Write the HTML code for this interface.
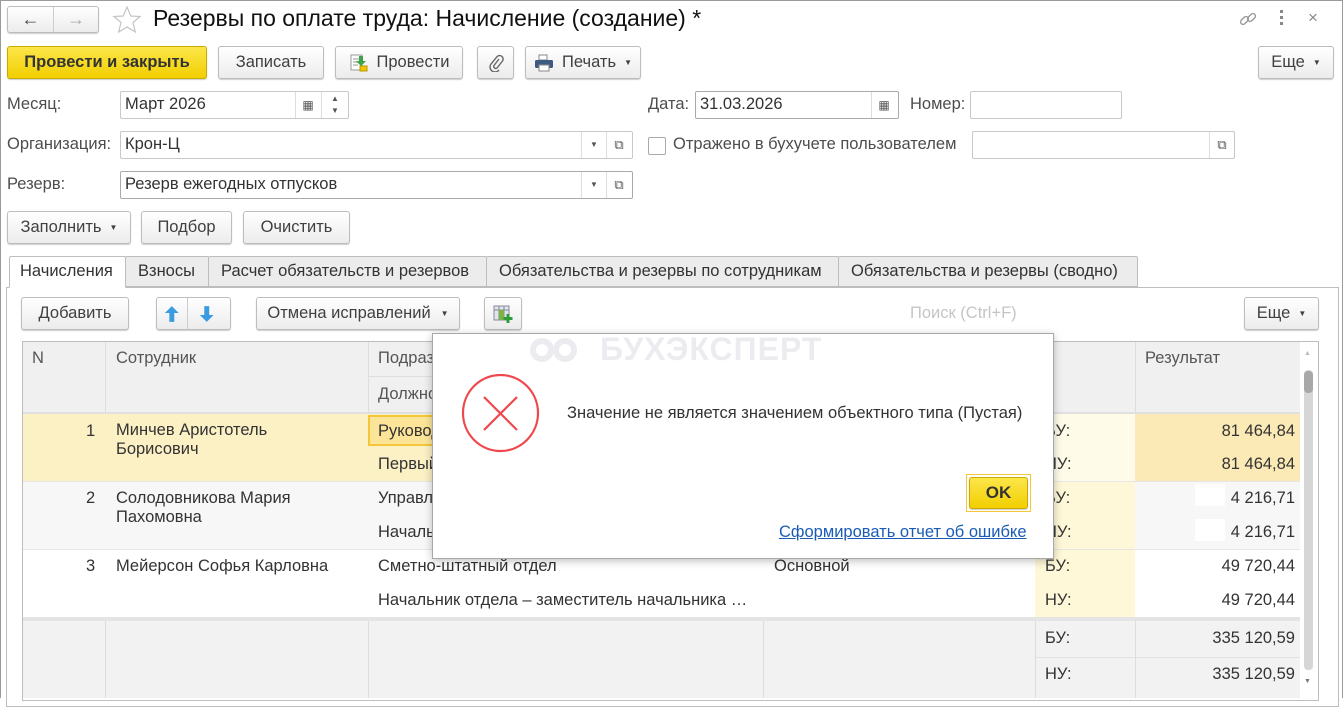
<!DOCTYPE html>
<html><head><meta charset="utf-8"><style>
*{box-sizing:border-box;margin:0;padding:0}
body{width:1343px;height:698px;overflow:hidden;background:#fff;font-family:"Liberation Sans",Arial,sans-serif;font-size:16.5px;color:#333;position:relative}
.a{position:absolute}
.btn{position:absolute;border:1px solid #bdbdbd;border-radius:3px;background:linear-gradient(#fff,#ececec);box-shadow:0 1px 1px rgba(0,0,0,.2);display:flex;align-items:center;justify-content:center;color:#404040;font-size:16.5px;white-space:nowrap}
.inp{position:absolute;border:1px solid #c8c8c8;border-radius:2px;background:#fff;height:28px;font-size:16.5px;color:#333;padding:3px 0 0 4px}
.lbl{position:absolute;color:#4d4d4d;font-size:16.5px;white-space:nowrap}
.dd{position:absolute;top:0;width:25px;height:26px;border-left:1px solid #ddd;text-align:center;font-size:8px;line-height:26px;color:#555}
.tab{position:absolute;top:256px;height:31px;border:1px solid #bdbdbd;background:#ececec;color:#333;font-size:16.5px;padding:5px 0 0 12px;border-radius:2px 2px 0 0;white-space:nowrap;overflow:hidden}
.cell{position:absolute;font-size:16.5px;color:#333;white-space:nowrap}
.hl{position:absolute;background:#ddd}
</style></head><body>
<div class="a" style="left:0;top:0;width:1343px;height:698px;border:1px solid #9a9a9a;border-bottom:none"></div>

<div class="btn" style="left:7px;top:6px;width:92px;height:27px;justify-content:flex-start">
 <span style="width:46px;text-align:center;font-size:18px;color:#444">&#8592;</span>
 <span style="width:1px;height:25px;background:#ccc"></span>
 <span style="width:45px;text-align:center;font-size:18px;color:#aaa">&#8594;</span>
</div>
<svg class="a" style="left:112px;top:5px" width="30" height="30" viewBox="0 0 30 30"><polygon points="15,2 18.8,11 28,11.5 21,17.5 23.3,27 15,22 6.7,27 9,17.5 2,11.5 11.2,11" fill="none" stroke="#c4c4c4" stroke-width="1.2"/></svg>
<div class="a" style="left:153px;top:5px;font-size:23px;color:#111;white-space:nowrap">Резервы по оплате труда: Начисление (создание) *</div>
<svg class="a" style="left:1238px;top:9px" width="20" height="20" viewBox="0 0 20 20"><g fill="none" stroke="#999" stroke-width="1.4"><rect x="2" y="9" width="9" height="5" rx="2.5" transform="rotate(-45 6.5 11.5)"/><rect x="9" y="6" width="9" height="5" rx="2.5" transform="rotate(-45 13.5 8.5)"/></g></svg>
<div class="a" style="left:1280px;top:10px;width:4px;font-size:0"><div style="width:3px;height:3px;background:#888;margin-bottom:3px"></div><div style="width:3px;height:3px;background:#888;margin-bottom:3px"></div><div style="width:3px;height:3px;background:#888"></div></div>
<div class="a" style="left:1308px;top:8px;font-size:17px;color:#888">×</div>

<div class="btn" style="left:7px;top:46px;width:200px;height:33px;background:linear-gradient(#fce64a,#f2cf00);border-color:#c9aa00;font-weight:bold;color:#333">Провести и закрыть</div>
<div class="btn" style="left:218px;top:46px;width:106px;height:33px">Записать</div>
<div class="btn" style="left:335px;top:46px;width:128px;height:33px"><svg width="20" height="20" viewBox="0 0 20 20" style="margin-right:8px"><rect x="2" y="2" width="11" height="15" fill="#fff" stroke="#999"/><path d="M4 6h6M4 9h6M4 12h5" stroke="#999"/><rect x="11" y="13" width="7" height="5" fill="#f2c400" stroke="#b90"/><path d="M10 3h4v5h3l-5 5-5-5h3z" fill="#3ca34a"/></svg>Провести</div>
<div class="btn" style="left:477px;top:46px;width:37px;height:33px"><svg width="16" height="18" viewBox="0 0 16 18"><path d="M11 5l-5 6.5a2 2 0 0 0 3 2.5l5.5-7a3.5 3.5 0 0 0-5.5-4.3L3 10a5 5 0 0 0 8 6" fill="none" stroke="#666" stroke-width="1.4"/></svg></div>
<div class="btn" style="left:525px;top:46px;width:116px;height:33px"><svg width="20" height="18" viewBox="0 0 20 18" style="margin-right:8px"><rect x="5" y="1" width="8" height="5" fill="#fff" stroke="#888"/><rect x="1" y="6" width="18" height="8" rx="1.5" fill="#3d5a80"/><rect x="5" y="11" width="10" height="6" fill="#fff" stroke="#888"/></svg>Печать <span style="font-size:8px;margin-left:8px">▼</span></div>
<div class="btn" style="left:1258px;top:46px;width:76px;height:33px">Еще <span style="font-size:8px;margin-left:8px">▼</span></div>

<div class="lbl" style="left:7px;top:95px">Месяц:</div>
<div class="inp" style="left:120px;top:91px;width:229px">Март 2026
 <div class="dd" style="left:174px;font-size:12px">&#9638;</div>
 <div class="dd" style="left:200px;width:27px;line-height:12px;padding-top:1px">▲<br>▼</div></div>
<div class="lbl" style="left:648px;top:95px">Дата:</div>
<div class="inp" style="left:695px;top:91px;width:204px;border-color:#aaa">31.03.2026<div class="dd" style="left:175px;font-size:12px">&#9638;</div></div>
<div class="lbl" style="left:910px;top:95px">Номер:</div>
<div class="inp" style="left:970px;top:91px;width:152px"></div>

<div class="lbl" style="left:7px;top:135px">Организация:</div>
<div class="inp" style="left:120px;top:131px;width:513px">Крон-Ц<div class="dd" style="left:460px">▼</div><div class="dd" style="left:485px;font-size:13px">&#10697;</div></div>
<div class="a" style="left:648px;top:137px;width:18px;height:18px;border:1px solid #aaa;border-radius:2px"></div>
<div class="lbl" style="left:673px;top:135px">Отражено в бухучете пользователем</div>
<div class="inp" style="left:972px;top:131px;width:263px"><div class="dd" style="left:236px;font-size:13px">&#10697;</div></div>

<div class="lbl" style="left:7px;top:175px">Резерв:</div>
<div class="inp" style="left:120px;top:171px;width:513px;border-color:#aaa">Резерв ежегодных отпусков<div class="dd" style="left:460px">▼</div><div class="dd" style="left:485px;font-size:13px">&#10697;</div></div>

<div class="btn" style="left:7px;top:211px;width:124px;height:33px">Заполнить <span style="font-size:8px;margin-left:8px">▼</span></div>
<div class="btn" style="left:141px;top:211px;width:91px;height:33px">Подбор</div>
<div class="btn" style="left:243px;top:211px;width:107px;height:33px">Очистить</div>

<div class="a" style="left:6px;top:287px;width:1333px;height:420px;border:1px solid #bdbdbd"></div>
<div class="tab" style="left:9px;width:117px;background:#fff;border-bottom-color:#fff;height:32px;padding-left:10px">Начисления</div>
<div class="tab" style="left:125px;width:84px">Взносы</div>
<div class="tab" style="left:208px;width:279px">Расчет обязательств и резервов</div>
<div class="tab" style="left:486px;width:353px">Обязательства и резервы по сотрудникам</div>
<div class="tab" style="left:838px;width:300px">Обязательства и резервы (сводно)</div>

<div class="btn" style="left:21px;top:297px;width:108px;height:33px">Добавить</div>
<div class="btn" style="left:156px;top:297px;width:75px;height:33px;justify-content:flex-start">
 <svg width="30" height="20" viewBox="0 0 30 20"><path d="M15 2l-7 7h4.5v9h5V9H22z" fill="#3a9be0"/></svg>
 <span style="width:1px;height:31px;background:#ccc"></span>
 <svg width="43" height="20" viewBox="0 0 43 20"><path d="M19 18l7-7h-4.5V2h-5v9H12z" fill="#3a9be0"/></svg></div>
<div class="btn" style="left:256px;top:297px;width:204px;height:33px">Отмена исправлений <span style="font-size:8px;margin-left:10px">▼</span></div>
<div class="btn" style="left:484px;top:297px;width:38px;height:33px"><svg width="22" height="20" viewBox="0 0 22 20"><rect x="2" y="2" width="15" height="14" fill="#dfe6ec" stroke="#889"/><path d="M2 6h15M7 2v14M12 2v14" stroke="#889"/><rect x="7" y="6" width="5" height="10" fill="#7cb342"/><path d="M16 10v9M11.5 14.5h9" stroke="#2e9c3a" stroke-width="3"/></svg></div>
<div class="a" style="left:910px;top:304px;color:#c5c5c5;font-size:16.5px">Поиск (Ctrl+F)</div>
<div class="btn" style="left:1244px;top:297px;width:75px;height:33px">Еще <span style="font-size:8px;margin-left:8px">▼</span></div>

<div class="a" style="left:22px;top:341px;width:1297px;height:360px;border:1px solid #bdbdbd;background:#fff"></div>
<div class="a" style="left:23px;top:342px;width:1277px;height:71px;background:#f0f0f0"></div>
<div class="a" style="left:23px;top:413px;width:1112px;height:68px;background:#fcf0c5"></div>
<div class="a" style="left:1135px;top:413px;width:165px;height:68px;background:#fbe9b6"></div>
<div class="a" style="left:1035px;top:413px;width:100px;height:68px;background:#fefbe9"></div>
<div class="a" style="left:23px;top:481px;width:1277px;height:68px;background:#f7f7f7"></div>
<div class="a" style="left:1035px;top:481px;width:100px;height:136px;background:#fef8d8"></div>
<div class="a" style="left:23px;top:621px;width:1277px;height:77px;background:#f2f2f2"></div>
<div class="a" style="left:368px;top:415px;width:130px;height:31px;border:2px solid #f4c63a;background:#fce598"></div>
<div class="hl" style="left:23px;top:412px;width:1277px;height:2px;background:#e0e0e0"></div>
<div class="hl" style="left:23px;top:481px;width:1277px;height:1px;background:#e6e6e6"></div>
<div class="hl" style="left:23px;top:549px;width:1277px;height:1px;background:#e6e6e6"></div>
<div class="hl" style="left:23px;top:617px;width:1277px;height:4px;background:#e4e4e4"></div>
<div class="hl" style="left:368px;top:376px;width:667px;height:1px"></div>
<div class="hl" style="left:1035px;top:657px;width:265px;height:1px;background:#e2e2e2"></div>
<div class="hl" style="left:105px;top:342px;width:1px;height:71px"></div>
<div class="hl" style="left:368px;top:342px;width:1px;height:71px"></div>
<div class="hl" style="left:1135px;top:342px;width:1px;height:71px"></div>
<div class="hl" style="left:105px;top:621px;width:1px;height:77px"></div>
<div class="hl" style="left:368px;top:621px;width:1px;height:77px"></div>
<div class="hl" style="left:763px;top:621px;width:1px;height:77px"></div>
<div class="hl" style="left:1035px;top:621px;width:1px;height:77px"></div>
<div class="hl" style="left:1135px;top:621px;width:1px;height:77px"></div>
<div class="a" style="left:1300px;top:342px;width:18px;height:356px;background:#fff"></div>
<div class="a" style="left:1304px;top:350px;font-size:7px;color:#bbb">▲</div>
<div class="a" style="left:1304px;top:370px;width:9px;height:300px;background:#d6d6d6;border-radius:4px"></div>
<div class="a" style="left:1304px;top:371px;width:9px;height:22px;background:#a8a8a8;border-radius:4px"></div>
<div class="a" style="left:1304px;top:678px;font-size:7px;color:#777">▼</div>

<div class="cell" style="left:32px;top:349px;color:#555">N</div>
<div class="cell" style="left:116px;top:349px;color:#555">Сотрудник</div>
<div class="cell" style="left:378px;top:349px;color:#555">Подразделение</div>
<div class="cell" style="left:378px;top:385px;color:#555">Должность</div>
<div class="cell" style="left:1145px;top:349px;color:#555">Результат</div>

<div class="cell" style="left:86px;top:422px">1</div>
<div class="cell" style="left:116px;top:421px;line-height:19px">Минчев Аристотель<br>Борисович</div>
<div class="cell" style="left:378px;top:422px">Руководство</div>
<div class="cell" style="left:378px;top:455px">Первый</div>
<div class="cell" style="left:1045px;top:422px">БУ:</div><div class="cell" style="left:1045px;top:455px">НУ:</div>
<div class="cell" style="left:1135px;top:422px;width:160px;text-align:right">81 464,84</div>
<div class="cell" style="left:1135px;top:455px;width:160px;text-align:right">81 464,84</div>

<div class="cell" style="left:86px;top:489px">2</div>
<div class="cell" style="left:116px;top:489px;line-height:19px">Солодовникова Мария<br>Пахомовна</div>
<div class="cell" style="left:378px;top:489px">Управление</div>
<div class="cell" style="left:378px;top:523px">Начальник</div>
<div class="cell" style="left:1045px;top:489px">БУ:</div><div class="cell" style="left:1045px;top:523px">НУ:</div>
<div class="a" style="left:1195px;top:484px;width:30px;height:22px;background:#fff"></div>
<div class="a" style="left:1195px;top:519px;width:30px;height:22px;background:#fff"></div>
<div class="cell" style="left:1135px;top:489px;width:160px;text-align:right">4 216,71</div>
<div class="cell" style="left:1135px;top:523px;width:160px;text-align:right">4 216,71</div>

<div class="cell" style="left:86px;top:557px">3</div>
<div class="cell" style="left:116px;top:557px">Мейерсон Софья Карловна</div>
<div class="cell" style="left:378px;top:557px">Сметно-штатный отдел</div>
<div class="cell" style="left:774px;top:557px">Основной</div>
<div class="cell" style="left:378px;top:591px;width:375px;overflow:hidden">Начальник отдела – заместитель начальника …</div>
<div class="cell" style="left:1045px;top:557px">БУ:</div><div class="cell" style="left:1045px;top:591px">НУ:</div>
<div class="cell" style="left:1135px;top:557px;width:160px;text-align:right">49 720,44</div>
<div class="cell" style="left:1135px;top:591px;width:160px;text-align:right">49 720,44</div>

<div class="cell" style="left:1045px;top:629px">БУ:</div><div class="cell" style="left:1045px;top:665px">НУ:</div>
<div class="cell" style="left:1135px;top:629px;width:160px;text-align:right">335 120,59</div>
<div class="cell" style="left:1135px;top:665px;width:160px;text-align:right">335 120,59</div>

<div class="a" style="left:432px;top:333px;width:622px;height:226px;background:#fff;border:1px solid #a8a8a8;box-shadow:0 2px 8px rgba(0,0,0,.25)"></div>
<svg class="a" style="left:527px;top:334px" width="60" height="32" viewBox="0 0 60 32"><g fill="none" stroke="#ececf0" stroke-width="6"><circle cx="15" cy="16" r="9"/><circle cx="38" cy="16" r="9"/></g></svg>
<div class="a" style="left:600px;top:331px;font-size:32px;font-weight:bold;color:#ececf0;letter-spacing:1px">БУХЭКСПЕРТ</div>
<svg class="a" style="left:461px;top:374px" width="80" height="80" viewBox="0 0 80 80"><ellipse cx="39.5" cy="39" rx="37.5" ry="38" fill="none" stroke="#f0474c" stroke-width="2.2"/><path d="M23 23L56 56M56 23L23 56" stroke="#f0474c" stroke-width="2.2"/></svg>
<div class="a" style="left:567px;top:404px;font-size:16.5px;color:#333;white-space:nowrap">Значение не является значением объектного типа (Пустая)</div>
<div class="a" style="left:966px;top:474px;width:65px;height:38px;border:1px solid #f4c63a"></div>
<div class="btn" style="left:969px;top:477px;width:59px;height:32px;background:linear-gradient(#fce64a,#f2cf00);border-color:#c9aa00;font-weight:bold;font-size:17px;color:#333">OK</div>
<div class="a" style="left:779px;top:523px;font-size:16.5px;color:#1a5bb5;text-decoration:underline;white-space:nowrap">Сформировать отчет об ошибке</div>
</body></html>
